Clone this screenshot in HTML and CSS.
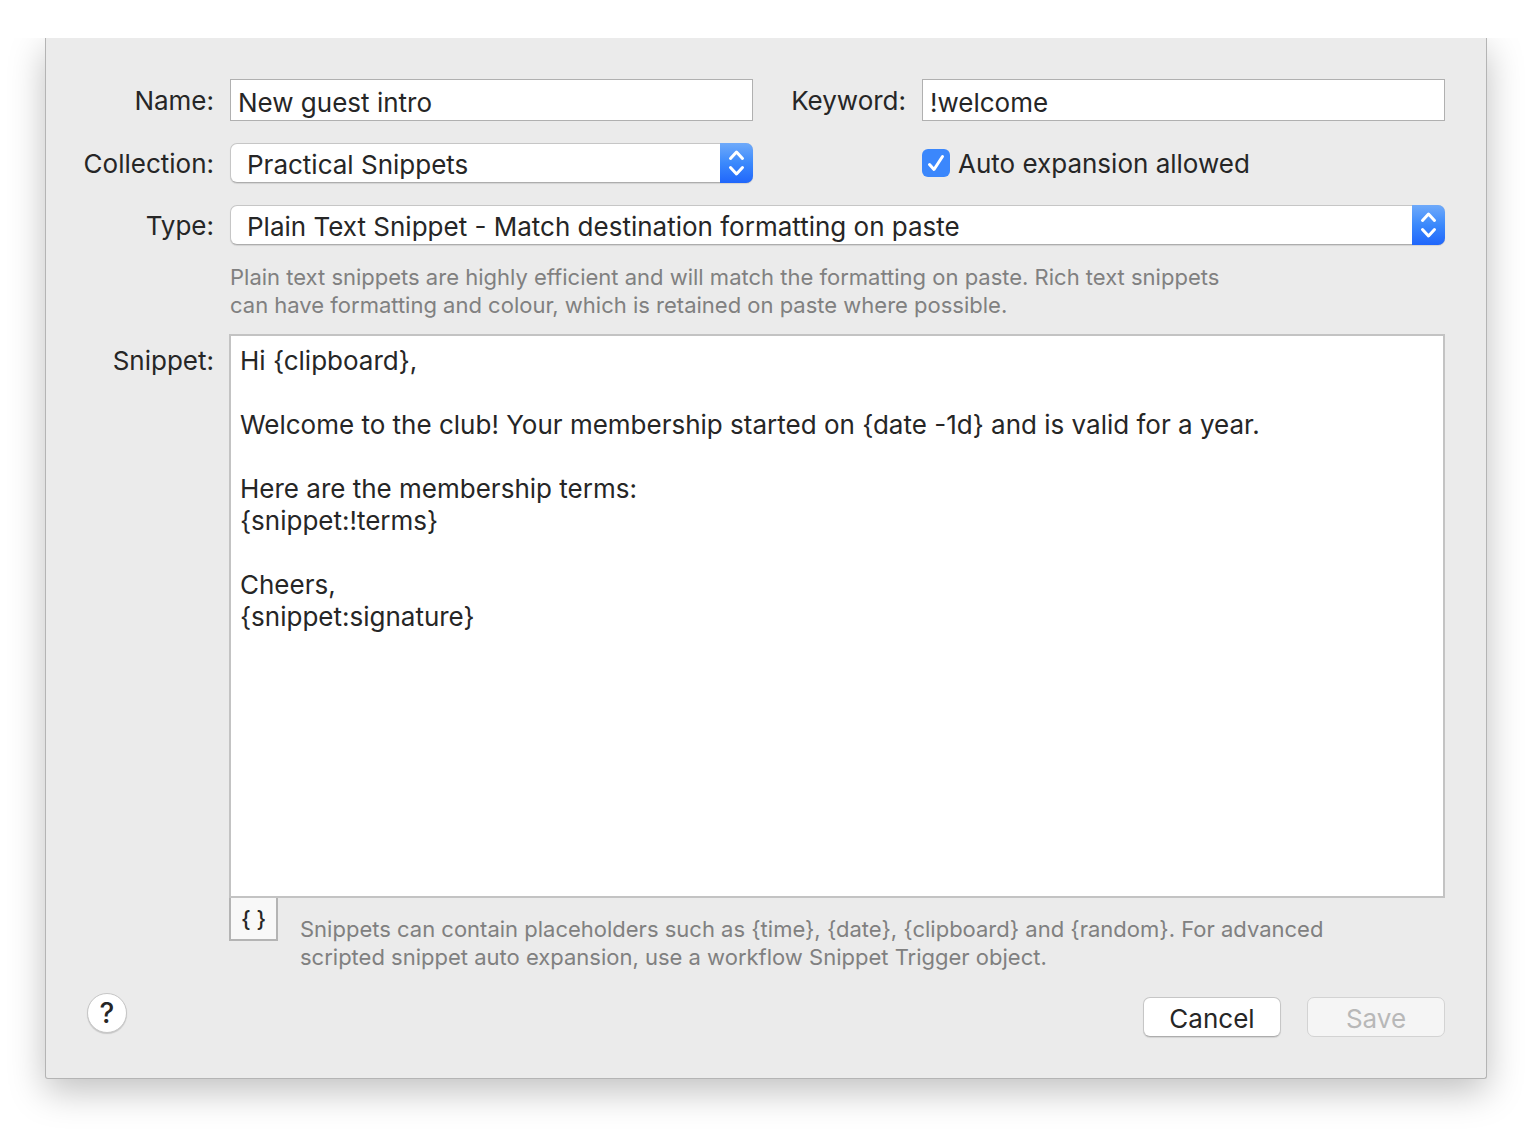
FILE: index.html
```html
<!DOCTYPE html>
<html lang="en">
<head>
    <meta charset="UTF-8">
    <meta name="viewport" content="width=device-width, initial-scale=1.0">
    <title>Edit Snippet</title>
    <link rel="stylesheet" href="styles.css">
</head>
<body>

    <form class="sheet">
        <div class="form-grid">
            <label class="label" for="name">Name:</label>
            <input class="text-input" type="text" id="name" value="New guest intro">

            <label class="label" for="keyword">Keyword:</label>
            <input class="text-input" type="text" id="keyword" value="!welcome">

            <label class="label" for="collection">Collection:</label>
            <div class="popup">
                <select id="collection">
                    <option>Practical Snippets</option>
                </select>
                <span class="popup-arrows">
                    <svg width="33" height="40" viewBox="0 0 33 40"><path d="M10.5 15.5l6-6.500 6 6.500M10.5 24.500l6 6.500 6-6.500"/></svg>
                </span>
            </div>

            <div class="check-row">
                <span class="checkbox">
                    <input type="checkbox" id="auto-expand" checked>
                    <svg width="28" height="28" viewBox="0 0 28 28"><path d="M7.5 15.5l4.500 5 8.500-13"/></svg>
                </span>
                <label for="auto-expand">Auto expansion allowed</label>
            </div>

            <label class="label" for="type">Type:</label>
            <div class="wide">
                <div class="popup">
                    <select id="type">
                        <option>Plain Text Snippet - Match destination formatting on paste</option>
                    </select>
                    <span class="popup-arrows">
                        <svg width="33" height="40" viewBox="0 0 33 40"><path d="M10.5 15.5l6-6.500 6 6.500M10.5 24.500l6 6.500 6-6.500"/></svg>
                    </span>
                </div>
                <p class="hint">Plain text snippets are highly efficient and will match the formatting on paste. Rich text snippets<br>can have formatting and colour, which is retained on paste where possible.</p>
            </div>
        </div>

        <div class="snippet-row">
            <label class="label" for="snippet">Snippet:</label>
            <div class="snippet-field">
                <textarea id="snippet" rows="17">Hi {clipboard},

Welcome to the club! Your membership started on {date -1d} and is valid for a year.

Here are the membership terms:
{snippet:!terms}

Cheers,
{snippet:signature}</textarea>
                <div class="below">
                    <button type="button" class="token-button" title="Insert placeholder">{ }</button>
                    <p class="hint">Snippets can contain placeholders such as {time}, {date}, {clipboard} and {random}. For advanced<br>scripted snippet auto expansion, use a workflow Snippet Trigger object.</p>
                </div>
            </div>
        </div>

        <div class="footer">
            <button type="button" class="help-button" title="Help">?</button>
            <div class="actions">
                <button type="button" class="button">Cancel</button>
                <button type="submit" class="button" disabled>Save</button>
            </div>
        </div>
    </form>

</body>
</html>
```
FILE: styles.css
```css
* {
    margin: 0;
    padding: 0;
    box-sizing: border-box;
}

body {
    background-color: #fff;
    padding: 38px 45px 53px;
}

body, input, select, textarea, button {
    font-family: 'Inter', 'Liberation Sans', sans-serif;
    font-size: 26px;
    color: #262626;
}

/* Sheet hangs from the top edge, so the shadow is cut off there */
.sheet {
    background-color: #ebebeb;
    border: 1px solid #b4b4b4;
    border-top: none;
    border-radius: 0 0 3px 3px;
    padding: 41px 41px 41px 39px;
    box-shadow: 0 12px 36px rgba(0, 0, 0, 0.25);
    clip-path: inset(0 -45px -60px -45px);
}

.form-grid {
    display: grid;
    grid-template-columns: 129px 1fr 137px 1fr;
    gap: 22px 16px;
}

.label {
    display: flex;
    justify-content: flex-end;
    line-height: 44px;
    height: 42px;
    white-space: nowrap;
}

.text-input {
    width: 100%;
    height: 42px;
    padding: 5px 7px 0;
    background-color: #fff;
    border: 1px solid #b0b0b0;
    border-radius: 0;
    outline: none;
}

/* Pop-up menus */
.popup {
    position: relative;
    height: 40px;
}

.popup select {
    display: block;
    width: 100%;
    height: 40px;
    padding: 2px 48px 0 16px;
    appearance: none;
    background-color: #fff;
    border: 1px solid #c6c6c6;
    border-bottom-color: #adadad;
    border-radius: 7px;
    box-shadow: 0 1px 1px rgba(0, 0, 0, 0.1);
    outline: none;
}

.popup-arrows {
    position: absolute;
    top: 0;
    right: 0;
    width: 33px;
    height: 40px;
    background: linear-gradient(#6faafa, #3b89fc 50%, #2066fb);
    border-radius: 0 7px 7px 0;
    pointer-events: none;
}

.popup-arrows svg, .checkbox svg {
    display: block;
    fill: none;
    stroke: #fff;
    stroke-width: 3;
    stroke-linecap: round;
    stroke-linejoin: round;
}

.form-grid .label[for="collection"], .form-grid .label[for="type"] {
    height: 40px;
    line-height: 42px;
}

/* Checkbox */
.check-row {
    grid-column: 4;
    display: flex;
    align-items: center;
    gap: 8px;
    height: 40px;
}

.checkbox {
    position: relative;
    width: 28px;
    height: 28px;
}

.checkbox input {
    display: block;
    width: 28px;
    height: 28px;
    appearance: none;
    background-color: #fff;
    border-radius: 6px;
}

.checkbox input:checked {
    background-color: #3b87fc;
}

.checkbox svg {
    position: absolute;
    top: 0;
    left: 0;
    pointer-events: none;
}

.wide {
    grid-column: 2 / -1;
    display: flex;
    flex-direction: column;
    gap: 18px;
}

.hint {
    font-size: 22px;
    line-height: 28px;
    color: #808080;
}

/* Snippet editor */
.snippet-row {
    display: grid;
    grid-template-columns: 129px 1fr;
    gap: 15px;
    margin-top: 15px;
}

.snippet-row .label {
    line-height: 54px;
}

textarea {
    display: block;
    width: 100%;
    padding: 9px 9px 7px;
    line-height: 32px;
    background-color: #fff;
    border: 2px solid #c3c3c3;
    border-radius: 0;
    outline: none;
    resize: none;
}

.below {
    display: flex;
    gap: 22px;
}

.below .hint {
    padding-top: 17px;
}

.token-button {
    flex: none;
    width: 49px;
    height: 43px;
    background-color: #f8f8f8;
    border: 2px solid #b4b4b4;
    border-top: none;
    font-size: 22px;
    font-weight: 500;
}

/* Footer */
.footer {
    display: flex;
    justify-content: space-between;
    margin-top: 22px;
    padding-left: 2px;
}

.help-button {
    width: 40px;
    height: 40px;
    background-color: #fff;
    border: 1px solid #c6c6c6;
    border-radius: 50%;
    box-shadow: 0 1px 1px rgba(0, 0, 0, 0.15);
    font-size: 28px;
    font-weight: 500;
    line-height: 36px;
}

.actions {
    display: flex;
    gap: 26px;
    padding-top: 4px;
}

.button {
    width: 138px;
    height: 40px;
    padding-top: 2px;
    background-color: #fff;
    border: 1px solid #c6c6c6;
    border-bottom-color: #adadad;
    border-radius: 7px;
    box-shadow: 0 1px 1px rgba(0, 0, 0, 0.1);
}

.button:disabled {
    background-color: #f5f5f5;
    border-color: #d3d3d3;
    box-shadow: none;
    color: #b8b8b8;
}
```
